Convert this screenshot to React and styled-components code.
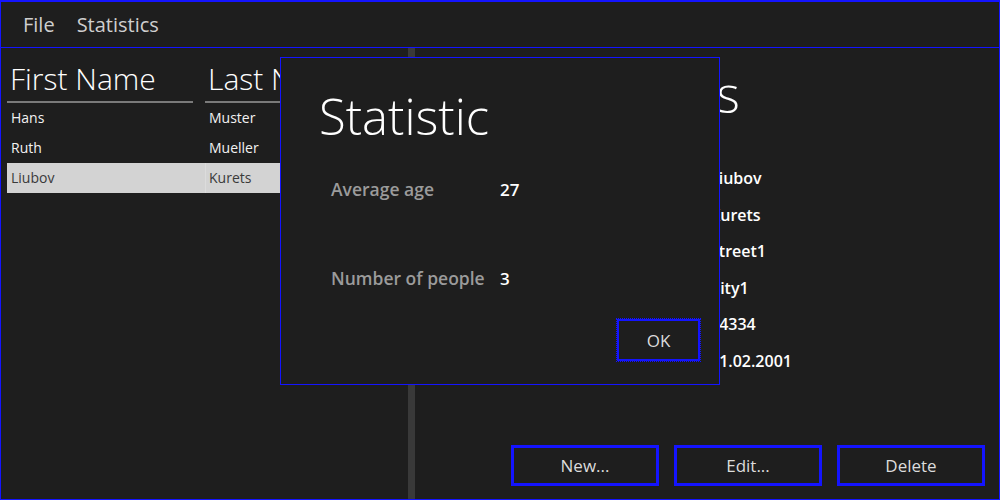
import { Fragment } from "react";
import styled, { createGlobalStyle } from "styled-components";

const GlobalStyle = createGlobalStyle`
  html, body {
    margin: 0;
    padding: 0;
    background: #1e1e1e;
  }
  body {
    font-family: "Open Sans", "Noto Sans", sans-serif;
    color: #f0f0f0;
  }
`;

const BLUE = "#1414ff";

const Window = styled.div`
  position: relative;
  width: 1000px;
  height: 500px;
  display: flex;
  flex-direction: column;
  background: #1e1e1e;
  overflow: hidden;
`;

const MenuBar = styled.div`
  height: 45px;
  border: 1px solid ${BLUE};
  border-top-width: 2px;
  display: flex;
  align-items: center;
  padding-left: 11px;
`;

const MenuItem = styled.span`
  padding: 0 11px;
  font-size: 20px;
  line-height: 45px;
  color: #cfcfcf;
`;

const Main = styled.div`
  flex: 1;
  display: flex;
  border: 1px solid ${BLUE};
  border-top: none;
  min-height: 0;
`;

const LeftPanel = styled.div`
  width: 401px;
  flex-shrink: 0;
  padding-left: 6px;
`;

const Table = styled.div`
  display: grid;
  grid-template-columns: 198px 198px;
`;

const HeaderCell = styled.div`
  padding-top: 11px;
  padding-right: 12px;
`;

const HeaderText = styled.div`
  font-size: 30px;
  font-weight: 300;
  line-height: 40px;
  padding: 0 0 2px 3px;
  color: #ffffff;
  border-bottom: 2px solid #7a7a7a;
  white-space: nowrap;
`;

const Cell = styled.div`
  height: 30px;
  line-height: 30px;
  padding-left: 3px;
  font-size: 14px;
  color: ${(p) => (p.$selected ? "#3a3a3a" : "#f2f2f2")};
  background: ${(p) => (p.$selected ? "#d3d3d3" : "transparent")};
  border-left: 1px solid ${(p) => (p.$selected && p.$second ? "#dcdcdc" : "transparent")};
  box-sizing: border-box;
`;

const Splitter = styled.div`
  width: 7px;
  flex-shrink: 0;
  background: #393939;
`;

const RightPanel = styled.div`
  flex: 1;
  min-width: 0;
  display: flex;
  flex-direction: column;
  padding: 14px 14px 13px 0;
`;

const DetailTitle = styled.div`
  padding-left: 173px;
  font-size: 50px;
  font-weight: 300;
  line-height: 64px;
  color: #ffffff;
`;

const Form = styled.div`
  margin-top: 34px;
  padding-left: 175px;
  display: grid;
  grid-template-columns: 120px auto;
  grid-auto-rows: 36.5px;
  align-items: center;
`;

const FormLabel = styled.span`
  font-size: 16px;
  font-weight: 600;
  color: #9a9a9a;
`;

const FormValue = styled.span`
  font-size: 16px;
  font-weight: 600;
  color: #ffffff;
`;

const ButtonRow = styled.div`
  margin-top: auto;
  display: flex;
  justify-content: flex-end;
  gap: 15px;
`;

const Button = styled.button`
  width: ${(p) => p.$width || 148}px;
  height: ${(p) => p.$height || 41}px;
  flex-shrink: 0;
  background: #1e1e1e;
  border: ${(p) => (p.$focus ? 2 : 3)}px solid ${BLUE};
  outline: ${(p) => (p.$focus ? `1px dotted ${BLUE}` : "none")};
  outline-offset: 0;
  color: #dcdcdc;
  font-family: inherit;
  font-size: 17px;
  padding: 0;
  cursor: pointer;
`;

const Dialog = styled.div`
  position: absolute;
  left: 280px;
  top: 57px;
  width: 438px;
  height: 326px;
  border: 1px solid ${BLUE};
  background: #1e1e1e;
  display: flex;
  flex-direction: column;
`;

const DialogTitle = styled.div`
  margin: 26px 0 0 38px;
  font-size: 49px;
  font-weight: 300;
  line-height: 64px;
  color: #ffffff;
`;

const StatGrid = styled.div`
  margin: 26px 0 0 50px;
  display: grid;
  grid-template-columns: 169px auto;
  grid-template-rows: 30px 30px;
  row-gap: 59px;
  align-items: center;
`;

const StatLabel = styled.span`
  font-size: 17.5px;
  font-weight: 600;
  color: #9b9b9b;
`;

const StatValue = styled.span`
  font-size: 17px;
  font-weight: 600;
  color: #ffffff;
`;

const DialogFooter = styled.div`
  margin-top: auto;
  display: flex;
  justify-content: flex-end;
  padding: 0 19px 23px 0;
`;

const people = [
  { first: "Hans", last: "Muster" },
  { first: "Ruth", last: "Mueller" },
  { first: "Liubov", last: "Kurets" },
];

const details = [
  ["First name", "Liubov"],
  ["Last name", "Kurets"],
  ["Street", "Street1"],
  ["City", "City1"],
  ["Postal code", "14334"],
  ["Birthday", "01.02.2001"],
];

export default function App() {
  const selected = 2;
  return (
    <>
      <GlobalStyle />
      <Window>
        <MenuBar>
          <MenuItem>File</MenuItem>
          <MenuItem>Statistics</MenuItem>
        </MenuBar>
        <Main>
          <LeftPanel>
            <Table>
              <HeaderCell>
                <HeaderText>First Name</HeaderText>
              </HeaderCell>
              <HeaderCell>
                <HeaderText>Last Name</HeaderText>
              </HeaderCell>
              {people.map((p, i) => (
                <Fragment key={p.first}>
                  <Cell $selected={i === selected}>{p.first}</Cell>
                  <Cell $selected={i === selected} $second>
                    {p.last}
                  </Cell>
                </Fragment>
              ))}
            </Table>
          </LeftPanel>
          <Splitter />
          <RightPanel>
            <DetailTitle>Details</DetailTitle>
            <Form>
              {details.map(([label, value]) => (
                <Fragment key={label}>
                  <FormLabel>{label}</FormLabel>
                  <FormValue>{value}</FormValue>
                </Fragment>
              ))}
            </Form>
            <ButtonRow>
              <Button>New...</Button>
              <Button>Edit...</Button>
              <Button>Delete</Button>
            </ButtonRow>
          </RightPanel>
        </Main>
        <Dialog>
          <DialogTitle>Statistic</DialogTitle>
          <StatGrid>
            <StatLabel>Average age</StatLabel>
            <StatValue>27</StatValue>
            <StatLabel>Number of people</StatLabel>
            <StatValue>3</StatValue>
          </StatGrid>
          <DialogFooter>
            <Button $width={83} $height={42} $focus>
              OK
            </Button>
          </DialogFooter>
        </Dialog>
      </Window>
    </>
  );
}
